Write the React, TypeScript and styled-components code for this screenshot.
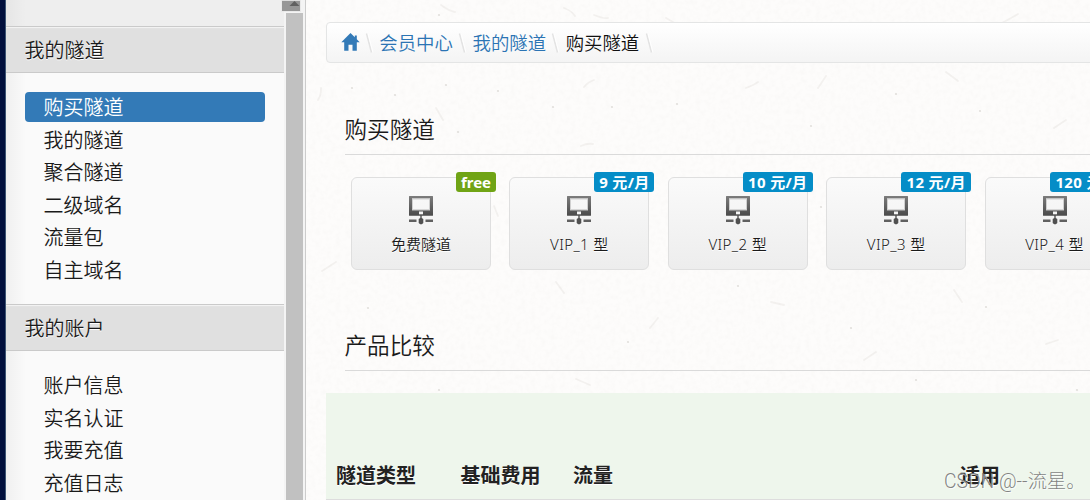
import React from 'react';
import styled, { createGlobalStyle } from 'styled-components';

const GlobalStyle = createGlobalStyle`
  * { box-sizing: border-box; }
  body {
    margin: 0;
    overflow: hidden;
    color: #1a1a1a;
    font-family: "Noto Sans", "Noto Sans CJK SC", sans-serif;
    font-weight: 350;
  }
`;

const Page = styled.div`
  position: relative;
  display: flex;
  width: 1090px;
  height: 500px;
  overflow: hidden;
  background: #fdfcfb;
`;

const Edge = styled.div`
  flex: none;
  width: 6px;
  background: #010f3c;
  border-right: 1px solid #3d5573;
`;

const Sidebar = styled.nav`
  flex: none;
  width: 279px;
  height: 500px;
  overflow: hidden;
  background: linear-gradient(90deg, rgba(0, 0, 0, 0.045), transparent 20px) #fafafa;
  border-right: 1px solid #f4f4f4;
`;

const SidebarTop = styled.div`
  height: 26px;
  background: linear-gradient(90deg, rgba(0, 0, 0, 0.035), transparent 20px) #eee;
`;

const GroupTitle = styled.h2`
  margin: 0;
  height: 47px;
  padding: 0 0 0 18.5px;
  border-top: 1px solid #cacaca;
  border-bottom: 1px solid #cacaca;
  background: #e0e0e0;
  box-shadow: inset 0 2px 1px -1px #f4f4f4;
  font-size: 20px;
  font-weight: inherit;
  line-height: 47px;
  text-shadow: 0 1px 0 #fff;
`;

const MenuList = styled.ul<{ $height: number }>`
  margin: 0;
  height: ${(p) => p.$height}px;
  padding: 19px 19px 0;
  list-style: none;
`;

const MenuItem = styled.li<{ $active?: boolean }>`
  height: 30px;
  margin-bottom: 2.5px;
  padding-left: 18.4px;
  border-radius: 4px;
  font-size: 20px;
  line-height: 32px;
  color: ${(p) => (p.$active ? '#fff' : '#1a1a1a')};
  background: ${(p) => (p.$active ? '#337ab7' : 'transparent')};
`;

const ScrollTrack = styled.div`
  flex: none;
  width: 21px;
  display: flex;
  flex-direction: column;
  background: #f4f4f4;
  border-right: 1px solid #ccc;
`;

const ScrollButton = styled.div`
  flex: none;
  position: relative;
  left: -4px;
  width: 20px;
  height: 12px;
  border: 1px solid #e9e9e9;
  border-top: 0;
  line-height: 0;
`;

const ScrollThumb = styled.div`
  flex: 1;
  width: 17px;
  margin: 1px 0 0 1px;
  background: #c1c1c1;
`;

const Main = styled.main`
  position: relative;
  flex: 1;
  min-width: 0;
  height: 500px;
  padding: 22px 0 0 20px;
  overflow: hidden;
`;

const Paper = styled.svg`
  position: absolute;
  inset: 0;
`;

const Content = styled.div`
  position: relative;
  width: 900px;
`;

const Breadcrumb = styled.div`
  display: flex;
  align-items: center;
  height: 41px;
  padding-left: 14px;
  border: 1px solid #e4e5e5;
  border-radius: 4px;
  background: linear-gradient(#ffffff, #f4f4f4);
  font-size: 18.4px;
  line-height: 40px;
`;

const Crumb = styled.span<{ $current?: boolean }>`
  width: 74.2px;
  padding-left: 0.3px;
  white-space: nowrap;
  color: ${(p) => (p.$current ? '#111' : '#2b74b4')};
`;

const SlashIcon = styled.svg`
  flex: none;
  width: 19px;
  height: 22px;
`;

const SectionTitle = styled.h1<{ $gap: number }>`
  margin: ${(p) => p.$gap}px 0 0 18.5px;
  height: 50px;
  border-bottom: 1px solid #dadada;
  font-size: 22.6px;
  font-weight: inherit;
  line-height: 50px;
`;

const CardRow = styled.div`
  display: flex;
  gap: 18.4px;
  padding: 22px 0 0 25px;
`;

const Card = styled.div`
  flex: none;
  position: relative;
  display: flex;
  flex-direction: column;
  align-items: center;
  width: 140px;
  height: 93px;
  padding-top: 17px;
  border: 1px solid #dfdfdf;
  border-radius: 6px;
  background: linear-gradient(#fafafa, #ededed);
`;

const CardLabel = styled.span<{ $spacing: number }>`
  margin-top: 7px;
  font-size: 15px;
  line-height: 24px;
  letter-spacing: ${(p) => p.$spacing}px;
  white-space: pre;
  text-shadow: 0 1px 0 #fff;
`;

const Badge = styled.span<{ $free?: boolean; $width: number }>`
  position: absolute;
  top: -6px;
  right: -6px;
  width: ${(p) => p.$width}px;
  height: 20px;
  border-radius: 3px;
  background: ${(p) => (p.$free ? '#70a415' : '#058dc7')};
  color: #fff;
  font-size: 15px;
  font-weight: 700;
  line-height: 20px;
  text-align: center;
  letter-spacing: ${(p) => (p.$free ? 0 : 0.35)}px;
  white-space: pre;
`;

const TableHead = styled.div`
  display: grid;
  grid-template-columns: 124.5px 112.5px 387px 1fr;
  align-items: end;
  height: 107px;
  margin-top: 22px;
  padding: 0 0 8px 10px;
  background: #eef6ec;
  border-bottom: 1px solid #ddd;
  color: #222;
  font-size: 20px;
  font-weight: 700;
  line-height: 30px;
  text-shadow: 0 1px 0 #fff;
`;

const Watermark = styled.div`
  position: absolute;
  left: 944px;
  top: 467px;
  font-family: Roboto, "Noto Sans CJK SC", sans-serif;
  font-size: 19.3px;
  font-weight: 300;
  line-height: 30px;
  white-space: pre;
  color: rgba(115, 115, 115, 0.9);
  text-shadow: 1px 1px 0 rgba(255, 255, 255, 0.75);
`;

const FIBRES = [
  'M12 100q3-4 3-12', 'M135 5q8 6 14 7', 'M258 8q8 3 11 8', 'M288 15q10 4 14 3', 'M130 108l7 12',
  'M288 80q-6 2-10 7', 'M275 146q6-3 12-2', 'M440 88q8-3 12-6', 'M520 76l-8 12',
  'M640 72l12 9', 'M712 14q-10 6-18 10', 'M30 262l-14 9', 'M250 282l8 11', 'M270 379l14 6',
  'M352 318l-8 10', 'M465 302l13 3', 'M570 352l-12 8', 'M648 290l8 12', 'M752 340l-12 4',
  'M188 206l4 10', 'M415 212l-5 12', 'M360 18l12 7', 'M760 120l-12 8',
];
const SPECKS = [
  [133, 15], [46, 88], [89, 95], [140, 85], [192, 91], [152, 132], [247, 107], [306, 107],
  [371, 104], [434, 28], [505, 126], [590, 94], [674, 111], [724, 48], [103, 341], [133, 390],
  [322, 342], [432, 286], [545, 328], [610, 380], [771, 390], [515, 207], [680, 307], [62, 308],
];

const HomeIcon = () => (
  <svg width="19" height="22" viewBox="0 0 19 22">
    <path fill="#337ab7" d="M9.500 1 .3 10.200h2.900v8.500h4.300v-6h4v6h4.300v-8.500h2.900l-2.900-2.900V3.500h-2v1.800z" />
  </svg>
);

const Slash = () => (
  <SlashIcon viewBox="0 0 19 22">
    <path d="M6.500 1.500 11.500 20.500" stroke="#e3e3e3" strokeWidth="1.500" fill="none" />
    <path d="M8 1.500 13 20.500" stroke="#fff" strokeWidth="1" fill="none" />
  </SlashIcon>
);

const TunnelIcon = () => (
  <svg width="26" height="30" viewBox="0 0 26 30">
    <defs>
      <linearGradient id="steel" x1="0" y1="0" x2="0" y2="1">
        <stop offset="0" stopColor="#7c7c7c" />
        <stop offset="1" stopColor="#4b4b4b" />
      </linearGradient>
    </defs>
    <path
      fill="url(#steel)"
      fillRule="evenodd"
      d="M1.500 1h23q.5 0 .5.5v18.700q0 .5-.5.5h-23q-.5 0-.5-.5V1.500q0-.5.5-.5zM4 3.500v11.700h18V3.500z"
    />
    <rect x="4.500" y="4" width="17" height="10.700" fill="none" stroke="#d0d0d0" strokeWidth="1" />
    <rect x="11" y="16.500" width="4" height="2.800" fill="#f5f5f5" />
    <path fill="#505050" d="M12.300 20h1.400v3l1.600 1v4l-1.500 1.300h-1.600L10.700 28v-4l1.600-1z" />
    <path fill="#606060" d="M1 24.500h7.500v2.500H1zM17.500 24.500H25v2.500h-7.500z" />
  </svg>
);

const plans = [
  { name: '免费隧道', price: 'free', width: 40 },
  { name: 'VIP_1 型', price: '9 元/月', width: 60 },
  { name: 'VIP_2 型', price: '10 元/月', width: 70 },
  { name: 'VIP_3 型', price: '12 元/月', width: 70 },
  { name: 'VIP_4 型', price: '120 元/月', width: 80 },
];

const groups = [
  { title: '我的隧道', height: 231, items: ['购买隧道', '我的隧道', '聚合隧道', '二级域名', '流量包', '自主域名'] },
  { title: '我的账户', height: 160, items: ['账户信息', '实名认证', '我要充值', '充值日志'] },
];

export default function App() {
  return (
    <>
      <GlobalStyle />
      <Page>
        <Edge />
        <Sidebar>
          <SidebarTop />
          {groups.map((group, g) => (
            <React.Fragment key={group.title}>
              <GroupTitle>{group.title}</GroupTitle>
              <MenuList $height={group.height}>
                {group.items.map((item, i) => (
                  <MenuItem key={item} $active={g === 0 && i === 0}>{item}</MenuItem>
                ))}
              </MenuList>
            </React.Fragment>
          ))}
        </Sidebar>
        <ScrollTrack>
          <ScrollButton>
            <svg width="18" height="11" viewBox="0 0 18 11">
              <rect width="18" height="11" fill="#969696" />
              <rect width="18" height="1" fill="#ddd" />
              <path d="M7.500 6 12.500 1 17.500 6z" fill="#606060" />
            </svg>
          </ScrollButton>
          <ScrollThumb />
        </ScrollTrack>
        <Main>
          <Paper width="784" height="500" viewBox="0 0 784 500">
            <filter id="grain" x="0" y="0" width="100%" height="100%">
              <feTurbulence type="fractalNoise" baseFrequency="0.2" numOctaves="3" seed="4" />
              <feColorMatrix values="0 0 0 0 .45  0 0 0 0 .43  0 0 0 0 .4  .09 0 0 0 -.035" />
            </filter>
            <rect width="784" height="500" filter="url(#grain)" />
            <g stroke="#8b857c" strokeOpacity=".09" strokeWidth="1.800" fill="none" strokeLinecap="round">
              {FIBRES.map((d) => <path key={d} d={d} />)}
            </g>
            <g fill="#77716a" fillOpacity=".2">
              {SPECKS.map(([x, y]) => <circle key={`${x}-${y}`} cx={x} cy={y} r="1.100" />)}
            </g>
          </Paper>
          <Content>
            <Breadcrumb>
              <HomeIcon />
              <Slash />
              <Crumb>会员中心</Crumb>
              <Slash />
              <Crumb>我的隧道</Crumb>
              <Slash />
              <Crumb $current>购买隧道</Crumb>
              <Slash />
            </Breadcrumb>
            <SectionTitle $gap={42}>购买隧道</SectionTitle>
            <CardRow>
              {plans.map((plan) => (
                <Card key={plan.name}>
                  <Badge $free={plan.price === 'free'} $width={plan.width}>{plan.price}</Badge>
                  <TunnelIcon />
                  <CardLabel $spacing={plan.price === 'free' ? 0 : 0.4}>{plan.name}</CardLabel>
                </Card>
              ))}
            </CardRow>
            <SectionTitle $gap={51}>产品比较</SectionTitle>
            <TableHead>
              <span>隧道类型</span>
              <span>基础费用</span>
              <span>流量</span>
              <span>适用</span>
            </TableHead>
          </Content>
        </Main>
        <Watermark>CSDN @--流星。</Watermark>
      </Page>
    </>
  );
}
